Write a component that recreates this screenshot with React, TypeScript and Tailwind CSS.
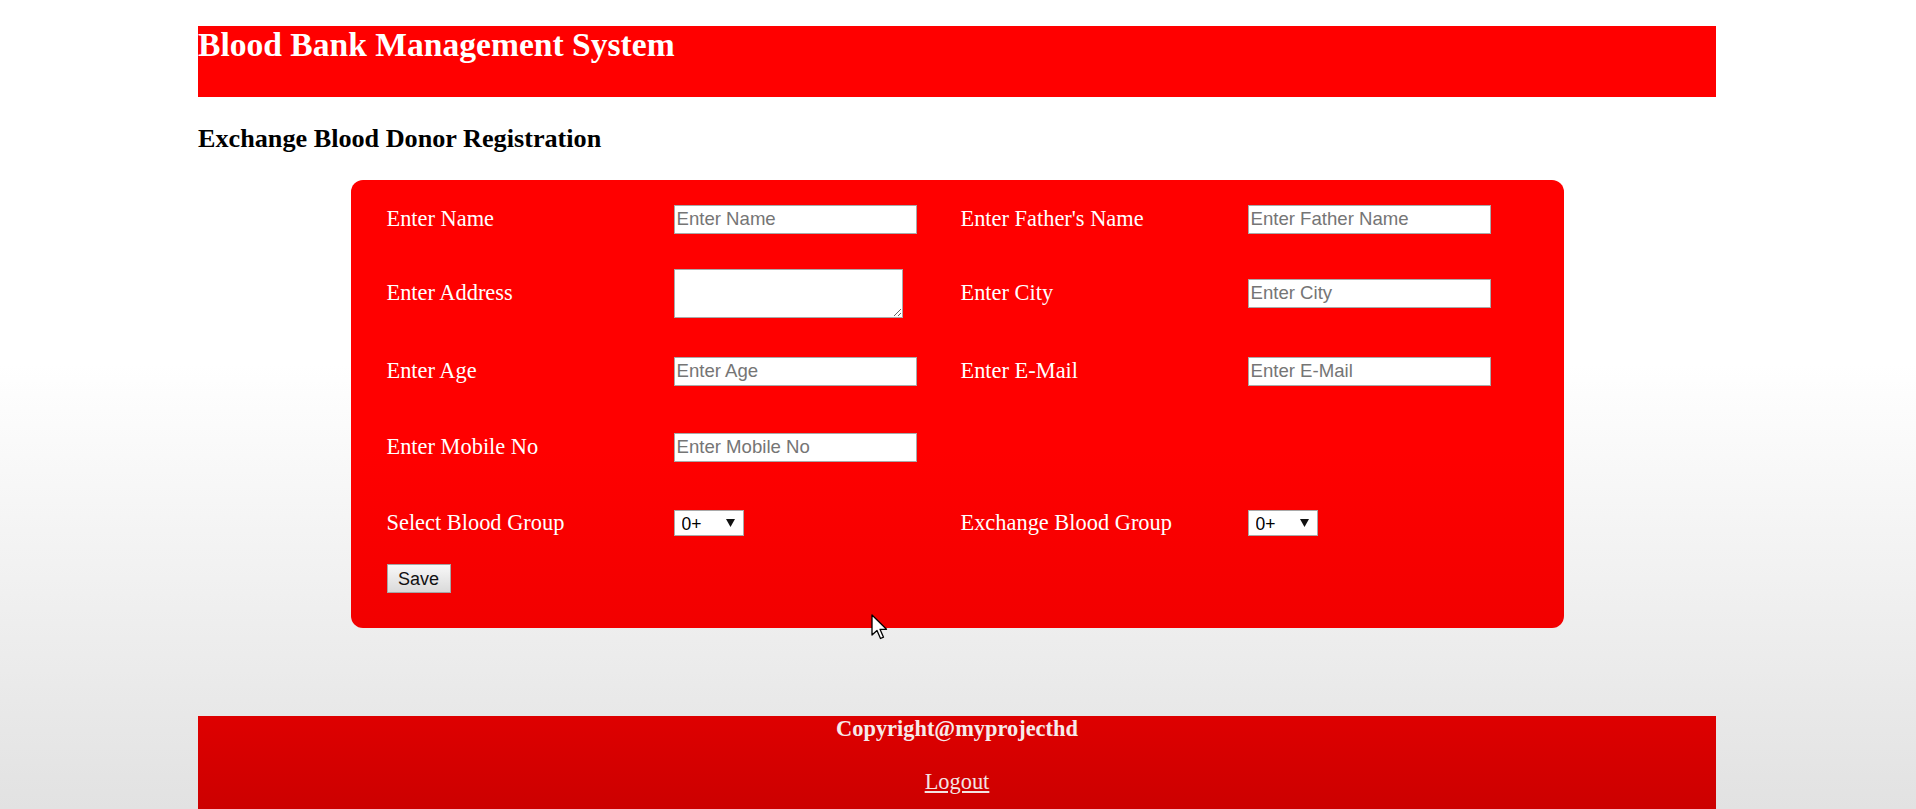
import React from "react";

const serif = { fontFamily: '"Liberation Serif", "Times New Roman", serif' };

function TextInput({ placeholder }: { placeholder: string }) {
  return (
    <input
      type="text"
      placeholder={placeholder}
      className="w-[243px] h-[29px] bg-white border border-[#a9a9a9] px-[2px] text-[18.6px] text-black placeholder:text-[#757575] outline-none"
      style={{ fontFamily: '"Liberation Sans", Arial, sans-serif' }}
    />
  );
}

function Select() {
  return (
    <div className="relative w-[70px] h-[26px]">
      <select
        className="appearance-none w-[70px] h-[26px] bg-white border border-[#a9a9a9] pl-[7px] text-[17.5px] text-black outline-none"
        style={{ fontFamily: '"Liberation Sans", Arial, sans-serif' }}
        defaultValue="0+"
      >
        <option>0+</option>
        <option>0-</option>
        <option>A+</option>
        <option>A-</option>
        <option>B+</option>
        <option>B-</option>
        <option>AB+</option>
        <option>AB-</option>
      </select>
      <svg
        className="absolute left-[52px] top-[9px] pointer-events-none"
        width="9"
        height="8"
        viewBox="0 0 9 8"
      >
        <path d="M0 0 H9 L4.5 8 Z" fill="#111" />
      </svg>
    </div>
  );
}

function Label({ children }: { children: React.ReactNode }) {
  return (
    <span className="text-[22.4px] leading-[normal] text-white" style={serif}>
      {children}
    </span>
  );
}

function Row({
  h,
  cells,
}: {
  h: string;
  cells: React.ReactNode[];
}) {
  return (
    <div className={`grid grid-cols-[287px_287px_287px_287px] items-center ${h}`}>
      {cells.map((c, i) => (
        <div key={i} className="flex items-center">
          {c}
        </div>
      ))}
    </div>
  );
}

export default function App() {
  return (
    <div
      className="relative h-[809px] w-full overflow-hidden bg-linear-to-b from-white from-45% to-[#e2e2e2] pt-[26px]"
      style={serif}
    >
      <div className="ml-[198px] w-[1518px]">
        <header className="h-[71px] bg-[#ff0000]">
          <h1 className="text-[33.6px] font-bold leading-[normal] text-white">
            Blood Bank Management System
          </h1>
        </header>

        <h2 className="mt-[27px] text-[26.2px] font-bold leading-[normal] text-black">
          Exchange Blood Donor Registration
        </h2>

        <form className="mx-auto mt-[26px] w-[1213px] rounded-[12px] bg-linear-to-b from-[#ff0000] from-60% to-[#f20000] pt-[2px] pb-[35px] pl-[36px]">
          <Row
            h="h-[74px]"
            cells={[
              <Label>Enter Name</Label>,
              <TextInput placeholder="Enter Name" />,
              <Label>Enter Father's Name</Label>,
              <TextInput placeholder="Enter Father Name" />,
            ]}
          />
          <Row
            h="h-[74px]"
            cells={[
              <Label>Enter Address</Label>,
              <textarea className="w-[229px] h-[49px] bg-white border border-[#a9a9a9] resize outline-none" />,
              <Label>Enter City</Label>,
              <TextInput placeholder="Enter City" />,
            ]}
          />
          <Row
            h="h-[82px]"
            cells={[
              <Label>Enter Age</Label>,
              <TextInput placeholder="Enter Age" />,
              <Label>Enter E-Mail</Label>,
              <TextInput placeholder="Enter E-Mail" />,
            ]}
          />
          <Row
            h="h-[70px]"
            cells={[
              <Label>Enter Mobile No</Label>,
              <TextInput placeholder="Enter Mobile No" />,
              <span />,
              <span />,
            ]}
          />
          <Row
            h="h-[82px]"
            cells={[
              <Label>Select Blood Group</Label>,
              <Select />,
              <Label>Exchange Blood Group</Label>,
              <Select />,
            ]}
          />
          <button
            type="button"
            className="w-[64px] h-[29px] border border-[#a6a6a6] bg-linear-to-b from-[#f8f8f8] to-[#dadada] text-[18px] text-[#111] leading-none"
            style={{ fontFamily: '"Liberation Sans", Arial, sans-serif' }}
          >
            Save
          </button>
        </form>

        <footer className="mt-[88px] h-[110px] bg-linear-to-b from-[#de0000] to-[#c90000] text-center text-white">
          <p className="text-[22.4px] font-bold leading-[normal] text-[#f6eaea]">
            Copyright@myprojecthd
          </p>
          <a
            href="#"
            className="mt-[27px] inline-block text-[22.4px] leading-[normal] text-[#f3e4e4] underline"
          >
            Logout
          </a>
        </footer>
      </div>

      <svg
        className="absolute left-[871px] top-[614px] pointer-events-none"
        width="18"
        height="26"
        viewBox="0 0 18 26"
      >
        <path
          d="M1 1 L1 21 L6 16.5 L9.5 24.5 L12.5 23.2 L9 15.3 L15.5 15.3 Z"
          fill="#fff"
          stroke="#000"
          strokeWidth="1.3"
          strokeLinejoin="round"
        />
      </svg>
    </div>
  );
}
